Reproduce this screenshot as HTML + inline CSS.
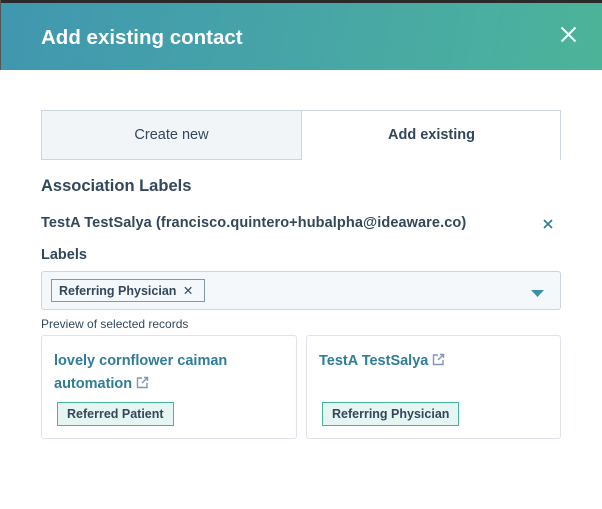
<!DOCTYPE html>
<html><head><style>
*{box-sizing:border-box;margin:0;padding:0}
body{width:602px;height:509px;background:#fff;font-family:"Liberation Sans",sans-serif;color:#33475b;position:relative;overflow:hidden}
.a{position:absolute}
.hdr{left:1px;top:3px;width:601px;height:67px;background:linear-gradient(100deg,#4097b0,#4aaea0 80%,#4cb398)}
.t{white-space:nowrap}
.card{border:1px solid #dfe3eb;border-radius:3px;background:#fff}
.lnk{color:#2f7d98;font-weight:bold;font-size:14.5px}
.badge{background:#e5f5f2;border:1px solid #45b49e;font-size:12.5px;font-weight:bold;color:#33475b;padding:4px 9px;height:24px;line-height:15px}
</style></head><body>
<div class="a" style="left:0;top:0;width:602px;height:3px;background:#2a2a2a"></div>
<div class="a" style="left:0;top:0;width:1px;height:70px;background:#555"></div>
<div class="a hdr"></div>
<div class="a t" style="left:41px;top:26px;color:#fff;font-size:20.5px;font-weight:bold">Add existing contact</div>
<svg class="a" style="left:560px;top:26px" width="17" height="17" viewBox="0 0 17 17"><path d="M1.5 1.5L15.5 15.5M15.5 1.5L1.5 15.5" stroke="#fff" stroke-width="2"/></svg>
<div class="a" style="left:41px;top:110px;width:520px;height:50px;border:1px solid #cbd6e2;border-bottom:none"></div>
<div class="a" style="left:41px;top:110px;width:261px;height:50px;background:#f2f5f8;border:1px solid #cbd6e2"></div>
<div class="a t" style="left:41px;top:127px;width:261px;text-align:center;font-size:14.5px">Create new</div>
<div class="a t" style="left:302px;top:127px;width:259px;text-align:center;font-size:14.5px;font-weight:bold">Add existing</div>
<div class="a t" style="left:41px;top:177px;font-size:16.5px;font-weight:bold">Association Labels</div>
<div class="a t" style="left:41px;top:215px;font-size:14.5px;font-weight:bold;letter-spacing:0.1px">TestA TestSalya (francisco.quintero+hubalpha@ideaware.co)</div>
<svg class="a" style="left:543px;top:219px" width="10" height="10" viewBox="0 0 10 10"><path d="M1 1L9 9M9 1L1 9" stroke="#2f7d98" stroke-width="1.6"/></svg>
<div class="a t" style="left:41px;top:247px;font-size:14.5px;font-weight:bold">Labels</div>
<div class="a" style="left:41px;top:271px;width:520px;height:39px;background:#f5f8fa;border:1px solid #cbd6e2;border-radius:3px"></div>
<div class="a t" style="left:51px;top:279px;width:154px;height:23px;border:1px solid #7c98b6;background:#f5f8fa;font-size:12.5px;font-weight:bold;padding:4px 7px;line-height:14px">Referring Physician <span style="font-weight:normal;margin-left:3px">✕</span></div>
<svg class="a" style="left:531px;top:290px" width="13" height="7"><path d="M0 0H13L6.5 7Z" fill="#3a8fab"/></svg>
<div class="a t" style="left:41px;top:317px;font-size:12px">Preview of selected records</div>
<div class="a card" style="left:41px;top:335px;width:256px;height:104px"></div>
<div class="a card" style="left:306px;top:335px;width:255px;height:104px"></div>
<div class="a lnk" style="left:54px;top:350px;line-height:23px;width:230px">lovely cornflower caiman automation <svg width="13" height="13" viewBox="0 0 13 13" style="vertical-align:-1px"><path d="M6 2H1.5V11.5H11V7M8 1.5H11.5V5M11.5 1.5L6 7" fill="none" stroke="#7c98b6" stroke-width="1.4"/></svg></div>
<div class="a lnk t" style="left:319px;top:350px;line-height:23px">TestA TestSalya <svg width="13" height="13" viewBox="0 0 13 13" style="vertical-align:-1px"><path d="M6 2H1.5V11.5H11V7M8 1.5H11.5V5M11.5 1.5L6 7" fill="none" stroke="#7c98b6" stroke-width="1.4"/></svg></div>
<div class="a badge t" style="left:57px;top:402px">Referred Patient</div>
<div class="a badge t" style="left:322px;top:402px">Referring Physician</div>
</body></html>
